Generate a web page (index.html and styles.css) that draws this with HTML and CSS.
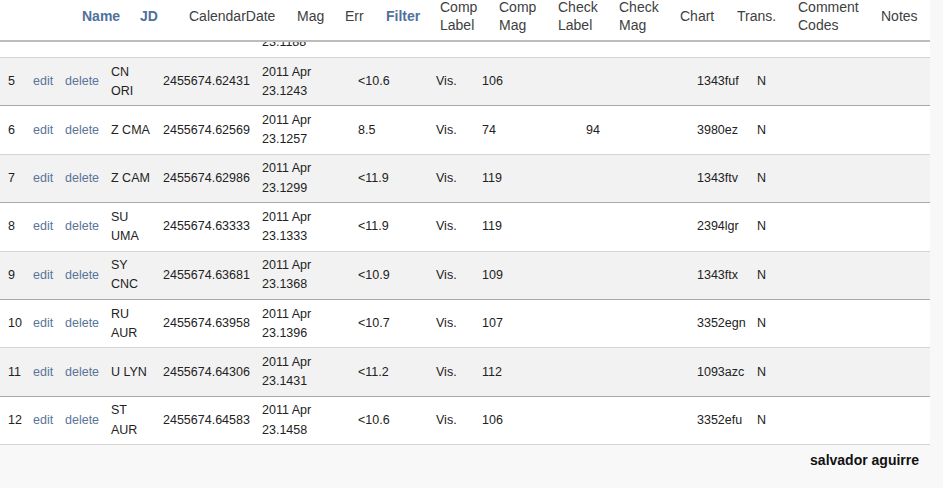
FILE: index.html
```html
<!DOCTYPE html>
<html>
<head>
<meta charset="utf-8">
<link rel="stylesheet" href="styles.css">
</head>
<body>
<div class="page">
  <div class="head">
    <div class="hc h-lead"></div>
    <div class="hc h-name link">Name</div>
    <div class="hc h-jd link">JD</div>
    <div class="hc h-date">CalendarDate</div>
    <div class="hc h-mag">Mag</div>
    <div class="hc h-err">Err</div>
    <div class="hc h-filter link">Filter</div>
    <div class="hc h-cl">Comp<br>Label</div>
    <div class="hc h-cm">Comp<br>Mag</div>
    <div class="hc h-kl">Check<br>Label</div>
    <div class="hc h-km">Check<br>Mag</div>
    <div class="hc h-chart">Chart</div>
    <div class="hc h-trans">Trans.</div>
    <div class="hc h-comm">Comment<br>Codes</div>
    <div class="hc h-notes">Notes</div>
  </div>
  <div class="scroller">
    <table class="obs">
      <colgroup>
        <col class="c-num"><col class="c-edit"><col class="c-del"><col class="c-name"><col class="c-jd"><col class="c-date"><col class="c-mag"><col class="c-err"><col class="c-filter"><col class="c-cl"><col class="c-cm"><col class="c-kl"><col class="c-km"><col class="c-chart"><col class="c-trans"><col class="c-comm"><col class="c-notes">
      </colgroup>
      <tbody>
        <tr class="even"><td>4</td><td><a>edit</a></td><td><a>delete</a></td><td class="wrap">T CMA</td><td>2455674.62100</td><td class="wrap">2011 Apr 23.1188</td><td>&lt;11.0</td><td></td><td>Vis.</td><td>110</td><td></td><td></td><td></td><td>3980ez</td><td>N</td><td></td><td></td></tr>
        <tr class="odd"><td>5</td><td><a>edit</a></td><td><a>delete</a></td><td class="wrap">CN ORI</td><td>2455674.62431</td><td class="wrap">2011 Apr 23.1243</td><td>&lt;10.6</td><td></td><td>Vis.</td><td>106</td><td></td><td></td><td></td><td>1343fuf</td><td>N</td><td></td><td></td></tr>
        <tr class="even"><td>6</td><td><a>edit</a></td><td><a>delete</a></td><td class="wrap">Z CMA</td><td>2455674.62569</td><td class="wrap">2011 Apr 23.1257</td><td>8.5</td><td></td><td>Vis.</td><td>74</td><td></td><td>94</td><td></td><td>3980ez</td><td>N</td><td></td><td></td></tr>
        <tr class="odd"><td>7</td><td><a>edit</a></td><td><a>delete</a></td><td class="wrap">Z CAM</td><td>2455674.62986</td><td class="wrap">2011 Apr 23.1299</td><td>&lt;11.9</td><td></td><td>Vis.</td><td>119</td><td></td><td></td><td></td><td>1343ftv</td><td>N</td><td></td><td></td></tr>
        <tr class="even"><td>8</td><td><a>edit</a></td><td><a>delete</a></td><td class="wrap">SU UMA</td><td>2455674.63333</td><td class="wrap">2011 Apr 23.1333</td><td>&lt;11.9</td><td></td><td>Vis.</td><td>119</td><td></td><td></td><td></td><td>2394lgr</td><td>N</td><td></td><td></td></tr>
        <tr class="odd"><td>9</td><td><a>edit</a></td><td><a>delete</a></td><td class="wrap">SY CNC</td><td>2455674.63681</td><td class="wrap">2011 Apr 23.1368</td><td>&lt;10.9</td><td></td><td>Vis.</td><td>109</td><td></td><td></td><td></td><td>1343ftx</td><td>N</td><td></td><td></td></tr>
        <tr class="even"><td>10</td><td><a>edit</a></td><td><a>delete</a></td><td class="wrap">RU AUR</td><td>2455674.63958</td><td class="wrap">2011 Apr 23.1396</td><td>&lt;10.7</td><td></td><td>Vis.</td><td>107</td><td></td><td></td><td></td><td>3352egn</td><td>N</td><td></td><td></td></tr>
        <tr class="odd"><td>11</td><td><a>edit</a></td><td><a>delete</a></td><td class="wrap">U LYN</td><td>2455674.64306</td><td class="wrap">2011 Apr 23.1431</td><td>&lt;11.2</td><td></td><td>Vis.</td><td>112</td><td></td><td></td><td></td><td>1093azc</td><td>N</td><td></td><td></td></tr>
        <tr class="even"><td>12</td><td><a>edit</a></td><td><a>delete</a></td><td class="wrap">ST AUR</td><td>2455674.64583</td><td class="wrap">2011 Apr 23.1458</td><td>&lt;10.6</td><td></td><td>Vis.</td><td>106</td><td></td><td></td><td></td><td>3352efu</td><td>N</td><td></td><td></td></tr>
      </tbody>
    </table>
  </div>
  <div class="footer">salvador aguirre</div>
</div>
</body>
</html>
```

FILE: styles.css
```css
html, body {
  margin: 0;
  padding: 0;
  background: #f8f8f8;
  font-family: "Liberation Sans", Arial, sans-serif;
  color: #222;
}

.page {
  width: 930px;
}

.head {
  display: flex;
  height: 32px;
  padding-bottom: 8px;
  background: #fff;
  border-bottom: 2px solid #bdbdbd;
}

.hc {
  display: flex;
  align-items: center;
  box-sizing: border-box;
  padding-left: 8px;
  font-size: 14px;
  line-height: 18px;
  color: #404040;
  flex: none;
}

.hc.link {
  color: #4f719c;
  font-weight: bold;
}

.h-lead { width: 74px; }
.h-name { width: 58px; }
.h-jd { width: 49px; }
.h-date { width: 108px; }
.h-mag { width: 48px; }
.h-err { width: 41px; }
.h-filter { width: 54px; }
.h-cl { width: 59px; }
.h-cm { width: 59px; }
.h-kl { width: 61px; }
.h-km { width: 61px; }
.h-chart { width: 57px; }
.h-trans { width: 61px; }
.h-comm { width: 83px; }
.h-notes { width: 57px; }

.scroller {
  overflow: hidden;
}

.obs {
  margin-top: -32.4px;
  width: 930px;
  table-layout: fixed;
  border-collapse: collapse;
  font-size: 12.5px;
  line-height: 19.2px;
}

.obs td {
  padding: 4.5px 4px 4.5px 8px;
  vertical-align: middle;
  white-space: nowrap;
  overflow: hidden;
}

.obs td.wrap {
  white-space: normal;
}

.obs tr.odd td {
  background: #f2f2f2;
  border-bottom: 1px solid #a8a8a8;
}

.obs tr.even td {
  background: #fff;
  border-bottom: 1px solid #d4d4d4;
}

.obs a {
  color: #5a7497;
  text-decoration: none;
}

.c-num { width: 25px; }
.c-edit { width: 32px; }
.c-del { width: 46px; }
.c-name { width: 52px; }
.c-jd { width: 99px; }
.c-date { width: 96px; }
.c-mag { width: 45px; }
.c-err { width: 33px; }
.c-filter { width: 46px; }
.c-cl { width: 52px; }
.c-cm { width: 52px; }
.c-kl { width: 52px; }
.c-km { width: 59px; }
.c-chart { width: 60px; }
.c-trans { width: 41px; }
.c-comm { width: 80px; }
.c-notes { width: 60px; }

.footer {
  text-align: right;
  padding: 7px 11px 0 0;
  font-size: 14px;
  line-height: 17px;
  font-weight: bold;
  color: #111;
}
```
